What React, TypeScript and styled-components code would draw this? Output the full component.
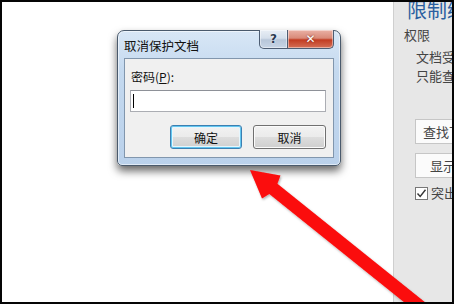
import * as React from "react"
import styled, { createGlobalStyle } from "styled-components"

const GlobalStyle = createGlobalStyle`
  html, body {
    margin: 0;
    padding: 0;
    background: #000;
  }
  * {
    box-sizing: border-box;
  }
`

const cjk = `"Noto Sans CJK SC", "Noto Sans", sans-serif`

const Frame = styled.div`
  position: relative;
  width: 454px;
  height: 304px;
  display: flex;
  overflow: hidden;
  background: #000;
  border: 2px solid #050505;
  font-family: ${cjk};
`

const Canvas = styled.div`
  position: relative;
  flex: 1;
  background: #fff;
`

const Panel = styled.aside`
  width: 59px;
  flex: none;
  background: #e7e7e7;
  border-left: 1px solid #cfcfcf;
  overflow: hidden;
  white-space: nowrap;
  display: flex;
  flex-direction: column;
`

const PanelTitle = styled.h1`
  margin: -3px 0 0 13px;
  font-size: 20px;
  line-height: 22px;
  font-weight: 400;
  color: #2b5fa0;
`

const Section = styled.div`
  margin: 5px 0 0 10px;
  font-size: 13px;
  line-height: 18px;
  color: #444;
`

const Note = styled.div<{ $top?: number }>`
  margin: ${(p) => p.$top ?? 0}px 0 0 22px;
  font-size: 13px;
  line-height: 19px;
  color: #444;
`

const PanelButton = styled.div<{ $indent: number; $top: number }>`
  margin: ${(p) => p.$top}px 0 0 21px;
  width: 160px;
  height: 25px;
  padding-left: ${(p) => p.$indent}px;
  background: #fbfbfb;
  border: 1px solid #c6c6c6;
  font-size: 13px;
  line-height: 23px;
  color: #444;
`

const CheckRow = styled.div`
  margin: 8px 0 0 21px;
  display: flex;
  align-items: center;
  gap: 3px;
  font-size: 13px;
  line-height: 14px;
  color: #444;
`

const CheckBox = styled.span`
  width: 13px;
  height: 13px;
  background: #fff;
  border: 1px solid #777;
  display: flex;
  align-items: center;
  justify-content: center;
`

const Dialog = styled.div`
  position: absolute;
  left: 115px;
  top: 28px;
  width: 224px;
  height: 136px;
  padding: 0 6px 7px 6px;
  display: flex;
  flex-direction: column;
  border: 1px solid #4a5a6c;
  border-radius: 7px 7px 5px 5px;
  background: linear-gradient(180deg, #d8e7f6 0%, #c4d9ef 30%, #bad1eb 100%);
  box-shadow: 0 5px 9px rgba(0, 0, 0, 0.6), inset 0 0 0 1px rgba(255, 255, 255, 0.55);
`

const TitleBar = styled.div`
  height: 27px;
  display: flex;
  align-items: flex-start;
  justify-content: space-between;
`

const TitleText = styled.span`
  margin-top: 7px;
  font-size: 12.5px;
  line-height: 16px;
  color: #111;
`

const CaptionButtons = styled.div`
  display: flex;
  margin-top: -1px;
`

const CaptionButton = styled.div<{ $close?: boolean }>`
  width: ${(p) => (p.$close ? 46 : 29)}px;
  height: 19px;
  display: flex;
  align-items: center;
  justify-content: center;
  border: 1px solid #4d5d73;
  border-top: none;
  border-left-width: ${(p) => (p.$close ? 0 : 1)}px;
  border-radius: ${(p) => (p.$close ? "0 0 5px 0" : "0 0 0 5px")};
  background: ${(p) =>
    p.$close
      ? "linear-gradient(180deg, #eab1a5 0%, #d98a79 45%, #c23c22 55%, #d56f56 100%)"
      : "linear-gradient(180deg, #e8eef5 0%, #d5dfeb 45%, #b7c6d9 55%, #c7d5e6 100%)"};
  box-shadow: inset 0 0 0 1px rgba(255, 255, 255, 0.45);
  color: ${(p) => (p.$close ? "#fff" : "#2b3a50")};
  font-family: "DejaVu Sans", sans-serif;
  font-weight: 700;
  font-size: 12px;
  text-shadow: ${(p) => (p.$close ? "0 0 2px #6b1a0c" : "0 0 2px #fff")};
`

const Client = styled.div`
  flex: 1;
  background: #f0f0f0;
  border: 1px solid #8196ad;
  padding: 10px 7px 0 5px;
  display: flex;
  flex-direction: column;
`

const Label = styled.label`
  padding-left: 1px;
  font-size: 12px;
  line-height: 16px;
  color: #111;
  u {
    text-decoration: underline;
  }
`

const Input = styled.div`
  margin-top: 5px;
  height: 22px;
  background: #fff;
  border: 1px solid #abadb3;
  border-top-color: #8e9198;
  padding: 3px 0 0 2px;
`

const Caret = styled.span`
  display: block;
  width: 1px;
  height: 14px;
  background: #000;
`

const ButtonRow = styled.div`
  margin-top: 13px;
  display: flex;
  justify-content: flex-end;
  gap: 11px;
`

const DialogButton = styled.div<{ $default?: boolean }>`
  width: ${(p) => (p.$default ? 72 : 73)}px;
  height: 24px;
  border: 1px solid ${(p) => (p.$default ? "#3c7fb1" : "#707070")};
  border-radius: 3px;
  background: linear-gradient(180deg, #f2f2f2 0%, #ebebeb 50%, #dddddd 51%, #cfcfcf 100%);
  box-shadow: ${(p) =>
    p.$default ? "inset 0 0 0 1px #62c6f0, inset 0 0 0 2px #e6f6fd" : "inset 0 0 0 1px #fbfbfb"};
  display: flex;
  align-items: center;
  justify-content: center;
  font-size: 12px;
  color: #111;
`

const ArrowLayer = styled.svg`
  position: absolute;
  left: -2px;
  top: -2px;
  width: 454px;
  height: 304px;
  pointer-events: none;
`

const Arrow = () => (
  <ArrowLayer viewBox="0 0 454 304">
    <defs>
      <filter id="arrowShadow" x="-10%" y="-10%" width="120%" height="120%">
        <feDropShadow dx="1" dy="1.5" stdDeviation="1" floodColor="#000" floodOpacity="0.3" />
      </filter>
    </defs>
    <polygon
      points="250,170 280.5,175.5 277.4,183.8 431.1,307.1 422.9,317.3 269.3,194 262,198.5"
      fill="#fb0a0a"
      filter="url(#arrowShadow)"
    />
  </ArrowLayer>
)

export default function App() {
  return (
    <>
      <GlobalStyle />
      <Frame>
        <Canvas>
          <Dialog>
            <TitleBar>
              <TitleText>取消保护文档</TitleText>
              <CaptionButtons>
                <CaptionButton>?</CaptionButton>
                <CaptionButton $close>✕</CaptionButton>
              </CaptionButtons>
            </TitleBar>
            <Client>
              <Label>
                密码(<u>P</u>):
              </Label>
              <Input>
                <Caret />
              </Input>
              <ButtonRow>
                <DialogButton $default>确定</DialogButton>
                <DialogButton>取消</DialogButton>
              </ButtonRow>
            </Client>
          </Dialog>
        </Canvas>
        <Panel>
          <PanelTitle>限制编辑</PanelTitle>
          <Section>权限</Section>
          <Note $top={3}>文档受保护，以防误编辑。</Note>
          <Note>只能查看此区域。</Note>
          <PanelButton $top={34} $indent={7}>
            查找下一个可编辑区域
          </PanelButton>
          <PanelButton $top={9} $indent={14}>
            显示可编辑的所有区域
          </PanelButton>
          <CheckRow>
            <CheckBox>
              <svg width="11" height="11" viewBox="0 0 11 11">
                <path d="M1.5 5.5 L4.2 8.5 L9.5 1.8" fill="none" stroke="#333" strokeWidth="1.4" />
              </svg>
            </CheckBox>
            突出显示可编辑的区域
          </CheckRow>
        </Panel>
        <Arrow />
      </Frame>
    </>
  )
}
